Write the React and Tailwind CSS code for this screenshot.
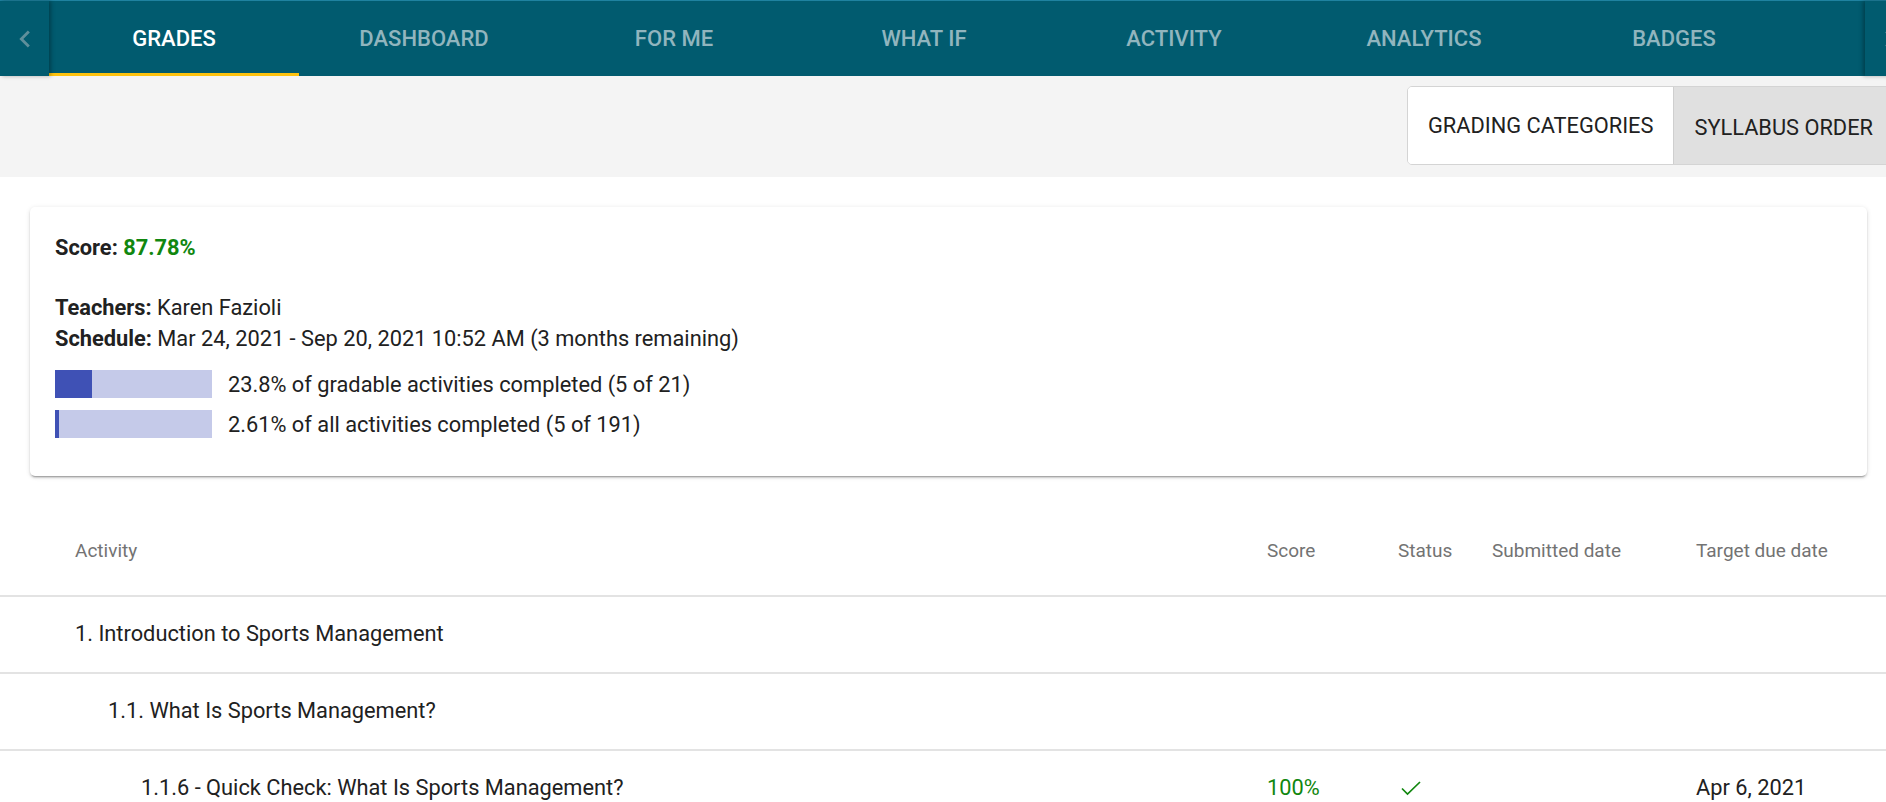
import { useState } from 'react';

const TABS = ['Grades', 'Dashboard', 'For me', 'What if', 'Activity', 'Analytics', 'Badges'];

const ROWS = [
    { title: '1. Introduction to Sports Management', depth: 0 },
    { title: '1.1. What Is Sports Management?', depth: 1 },
    {
        title: '1.1.6 - Quick Check: What Is Sports Management?',
        depth: 2,
        score: '100%',
        done: true,
        due: 'Apr 6, 2021',
    },
];

const indent = ['pl-[75px]', 'pl-[108px]', 'pl-[141px]'];

const Chevron = ({ dir = 'left' }) => (
    <svg width="34" height="34" viewBox="0 0 24 24" fill="#5f8f9b">
        {dir === 'left' ? (
            <path d="M15.41 7.41L14 6l-6 6 6 6 1.41-1.41L10.83 12z" />
        ) : (
            <path d="M10 6L8.59 7.41 13.17 12l-4.58 4.59L10 18l6-6z" />
        )}
    </svg>
);

const CheckMark = () => (
    <svg width="20" height="15" viewBox="0 0 20 15" fill="none">
        <polyline points="1,7.5 6.5,13 19,1" stroke="#11870f" strokeWidth="1.7" />
    </svg>
);

const Progress = ({ value, label }) => (
    <div className="flex h-[28px] items-center">
        <div className="h-[28px] w-[157px] shrink-0 bg-[#c5cae9]">
            <div className="h-full bg-[#3f51b5]" style={{ width: `${value}%` }} />
        </div>
        <span className="ml-[16px] leading-[31px]">{label}</span>
    </div>
);

const App = () => {
    const [tab, setTab] = useState('Grades');
    const [order, setOrder] = useState('syllabus');

    return (
        <div className="min-h-screen w-full overflow-hidden bg-white font-['Roboto',sans-serif] text-[21.8px] text-[#212121]">
            <div className="w-[1914px]">
                <nav className="flex h-[76px] border-t border-[#1f82a0] bg-[#015b6f]">
                    <button className="relative z-10 flex w-[49px] shrink-0 items-center justify-center shadow-[2px_0_4px_rgba(0,0,0,0.3)]">
                        <Chevron />
                    </button>
                    <div className="flex flex-1">
                        {TABS.map(t => (
                            <button
                                key={t}
                                onClick={() => setTab(t)}
                                className={`relative flex w-[250px] items-center justify-center text-[22px] font-medium uppercase ${
                                    tab === t ? 'text-white' : 'text-[#91b5be]'
                                }`}
                            >
                                {t}
                                {tab === t && <span className="absolute inset-x-0 bottom-0 h-[3px] bg-[#fdc20f]" />}
                            </button>
                        ))}
                    </div>
                    <button className="relative z-10 flex w-[49px] shrink-0 items-center justify-center shadow-[-2px_0_4px_rgba(0,0,0,0.3)]">
                        <Chevron dir="right" />
                    </button>
                </nav>

                <div className="flex h-[101px] justify-end bg-[#f4f4f4] pt-[10px] pr-[20px]">
                    <div className="flex h-[79px] overflow-hidden rounded-[5px] border border-[#d4d4d4]">
                        <button
                            onClick={() => setOrder('categories')}
                            className={`px-[20px] pt-[2px] uppercase ${order === 'categories' ? 'bg-[#e0e0e0]' : 'bg-white'}`}
                        >
                            Grading categories
                        </button>
                        <button
                            onClick={() => setOrder('syllabus')}
                            className={`border-l border-[#cfcfcf] px-[20px] pt-[5px] uppercase ${
                                order === 'syllabus' ? 'bg-[#e0e0e0]' : 'bg-white'
                            }`}
                        >
                            Syllabus order
                        </button>
                    </div>
                </div>

                <div className="mt-[30px] ml-[30px] w-[1837px] rounded-[5px] bg-white px-[25px] pt-[25px] pb-[38px] shadow-[0_3px_1px_-2px_rgba(0,0,0,0.2),0_2px_2px_0_rgba(0,0,0,0.14),0_1px_5px_0_rgba(0,0,0,0.12)]">
                    <p className="leading-[31px] font-bold">
                        Score: <span className="text-[#11870f]">87.78%</span>
                    </p>
                    <p className="mt-[29px] leading-[31px]">
                        <b>Teachers:</b> Karen Fazioli
                    </p>
                    <p className="leading-[31px]">
                        <b>Schedule:</b> Mar 24, 2021 - Sep 20, 2021 10:52 AM (3 months remaining)
                    </p>
                    <div className="mt-[16px] flex flex-col gap-[12px]">
                        <Progress value={23.8} label="23.8% of gradable activities completed (5 of 21)" />
                        <Progress value={2.61} label="2.61% of all activities completed (5 of 191)" />
                    </div>
                </div>

                <div className="mt-[31px]">
                    <div className="flex h-[90px] items-center border-b-2 border-[#e3e3e3] text-[19px] text-[#737373]">
                        <div className="w-[1267px] shrink-0 pl-[75px]">Activity</div>
                        <div className="w-[131px] shrink-0">Score</div>
                        <div className="w-[94px] shrink-0">Status</div>
                        <div className="w-[204px] shrink-0">Submitted date</div>
                        <div className="flex-1">Target due date</div>
                    </div>
                    {ROWS.map(row => (
                        <div key={row.title} className="flex h-[77px] items-center border-b-2 border-[#e3e3e3]">
                            <div className={`w-[1267px] shrink-0 ${indent[row.depth]}`}>{row.title}</div>
                            <div className="w-[131px] shrink-0 text-[#11870f]">{row.score}</div>
                            <div className="w-[94px] shrink-0 pl-[3px]">{row.done && <CheckMark />}</div>
                            <div className="w-[204px] shrink-0" />
                            <div className="flex-1">{row.due}</div>
                        </div>
                    ))}
                </div>
            </div>
        </div>
    );
};

export default App;
